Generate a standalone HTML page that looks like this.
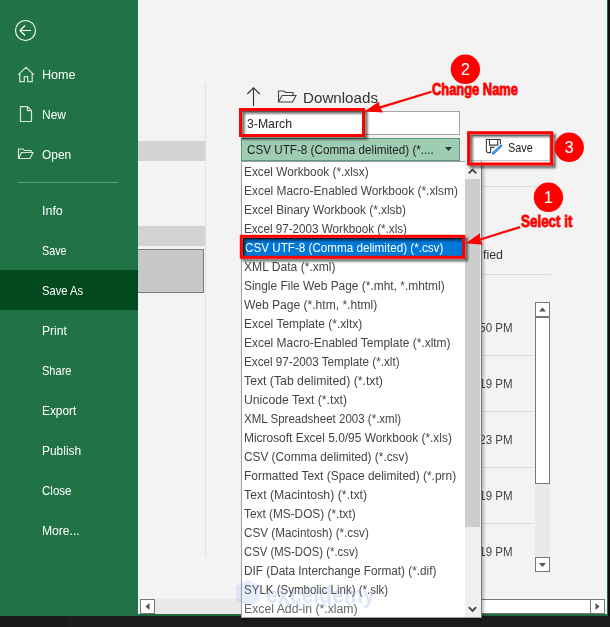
<!DOCTYPE html>
<html><head><meta charset="utf-8"><title>Save As CSV UTF-8</title>
<style>
*{margin:0;padding:0;box-sizing:border-box}
html,body{width:610px;height:627px;overflow:hidden;background:#f3f3f3;font-family:"Liberation Sans",sans-serif;}
.abs{position:absolute}
#root{position:relative;width:610px;height:627px;overflow:hidden;background:#f3f3f3}
.t{position:absolute;white-space:nowrap;line-height:1}
.side{left:0;top:0;width:138px;height:616px;background:#217346}
.nav{position:absolute;left:42px;color:#fff;font-size:13px;white-space:nowrap;line-height:16px;height:16px;transform-origin:0 50%;margin-top:1px}
.li{position:absolute;left:245px;color:#444;font-size:12px;white-space:nowrap;line-height:19px;height:19px;transform-origin:0 50%}
.tm{position:absolute;right:97.5px;color:#444;font-size:12px;white-space:nowrap;line-height:16px;transform-origin:100% 50%;transform:scaleX(.95)}
.hl{position:absolute;height:1px;background:#dcdcdc}
</style></head><body><div id="root">

<!-- sidebar -->
<div class="abs side"></div>
<div class="abs" style="left:0;top:270px;width:138px;height:40px;background:#024a1e"></div>
<svg class="abs" style="left:0;top:0" width="138" height="200" viewBox="0 0 138 200" fill="none" stroke="#fff" stroke-width="1.1">
  <circle cx="25.5" cy="30.5" r="10"/>
  <path d="M31 30.5H20.5M25 25.5l-5 5 5 5" stroke-width="1.2"/>
  <g stroke="#d6e6dc" stroke-width="1.2">
  <path d="M18.3 74.600l7.700-7.200 7.700 7.200M19.800 73.300v8.300h4.500v-5h3.400v5h4.500V73.300"/>
  <path d="M20.500 106.700h7l4 4v10.800h-11zM27.500 106.700v4h4"/>
  <path d="M18.500 158.500v-9.500h4.500l1.500 1.500h6.500v2.500M18.500 158.500l3-6h11.500l-3 6z"/>
  </g>
</svg>
<div class="t" style="left:42px;transform-origin:0 50%;top:68.00px;font-size:13px;color:#fff;transform:scaleX(0.969)">Home</div>
<div class="t" style="left:42px;transform-origin:0 50%;top:108.00px;font-size:13px;color:#fff;transform:scaleX(0.921)">New</div>
<div class="t" style="left:42px;transform-origin:0 50%;top:148.00px;font-size:13px;color:#fff;transform:scaleX(0.918)">Open</div>
<div class="t" style="left:42px;transform-origin:0 50%;top:204.00px;font-size:13px;color:#fff;transform:scaleX(0.959)">Info</div>
<div class="t" style="left:42px;transform-origin:0 50%;top:244.00px;font-size:13px;color:#fff;transform:scaleX(0.828)">Save</div>
<div class="t" style="left:42px;transform-origin:0 50%;top:284.00px;font-size:13px;color:#fff;transform:scaleX(0.864)">Save As</div>
<div class="t" style="left:42px;transform-origin:0 50%;top:324.00px;font-size:13px;color:#fff;transform:scaleX(0.928)">Print</div>
<div class="t" style="left:42px;transform-origin:0 50%;top:364.00px;font-size:13px;color:#fff;transform:scaleX(0.850)">Share</div>
<div class="t" style="left:42px;transform-origin:0 50%;top:404.00px;font-size:13px;color:#fff;transform:scaleX(0.913)">Export</div>
<div class="t" style="left:42px;transform-origin:0 50%;top:444.00px;font-size:13px;color:#fff;transform:scaleX(0.919)">Publish</div>
<div class="t" style="left:42px;transform-origin:0 50%;top:484.00px;font-size:13px;color:#fff;transform:scaleX(0.887)">Close</div>
<div class="t" style="left:42px;transform-origin:0 50%;top:524.00px;font-size:13px;color:#fff;transform:scaleX(0.932)">More...</div>
<div class="abs" style="left:18px;top:182px;width:100px;height:1px;background:#5a9a76"></div>

<!-- middle pane -->
<div class="abs" style="left:138px;top:141px;width:67px;height:19.500px;background:#d3d3d3"></div>
<div class="abs" style="left:138px;top:225.500px;width:67px;height:20px;background:#d3d3d3"></div>
<div class="abs" style="left:138px;top:249px;width:66px;height:43.500px;background:#c8c8c8;border:1px solid #7c7c7c;border-left:none"></div>
<div class="abs" style="left:205px;top:83px;width:1px;height:473px;background:#e1e1e1"></div>

<!-- main header -->
<svg class="abs" style="left:240px;top:84px" width="70" height="26" viewBox="0 0 70 26" fill="none" stroke="#333" stroke-width="1.1">
  <path d="M13.500 22V3.800M7.300 10l6.200-6.200 6.200 6.200"/>
  <path d="M38.500 18v-11h5.500l1.500 1.500h7.500v3M38.500 18l3.500-6.500h14l-3.500 6.500z" stroke="#444"/>
</svg>

<!-- file name input -->
<div class="abs" style="left:241px;top:111px;width:219px;height:24px;background:#fff;border:1px solid #a6a6a6"></div>

<!-- combo -->
<div class="abs" style="left:241px;top:138px;width:219px;height:22.500px;background:#9fcdb3;border:1px solid #5a9c78"></div>
<svg class="abs" style="left:444px;top:146px" width="10" height="6" viewBox="0 0 10 6"><path d="M1 1h7l-3.500 4z" fill="#333"/></svg>

<!-- save button -->
<div class="abs" style="left:470px;top:135px;width:80px;height:26px;background:#fff;border:1px solid #c6c6c6"></div>
<svg class="abs" style="left:484px;top:138px" width="20" height="20" viewBox="0 0 20 20" fill="none" stroke="#3c3c3c" stroke-width="1.1">
  <path d="M16.400 6.300V1.500H2.400V13.300L3.600 14.600H6.600"/><path d="M5.500 1.500V7.100H13.700V1.500M6.600 15V9.400H10.500"/>
  <path d="M17 8L9.300 15.200" stroke="#2b88d8" stroke-width="2.700" stroke-linecap="round"/>
  <path d="M16.600 8.400L9.700 14.800" stroke="#bfe0fa" stroke-width=".8" stroke-dasharray="1.2 1"/>
  <path d="M7.800 16.500l.6-2 1.500 1.400z" fill="#2b88d8" stroke="none"/>
</svg>

<div class="t" style="left:303.3px;transform-origin:0 50%;top:89.98px;font-size:15.5px;color:#333;transform:scaleX(0.978)">Downloads</div>
<div class="t" style="left:247px;transform-origin:0 50%;top:117.74px;font-size:12px;color:#222;transform:scaleX(1.022)">3-March</div>
<div class="t" style="left:246.8px;transform-origin:0 50%;top:143.64px;font-size:12px;color:#222;transform:scaleX(0.973)">CSV UTF-8 (Comma delimited) (*....</div>
<div class="t" style="left:508px;transform-origin:0 50%;top:141.94px;font-size:12px;color:#222;transform:scaleX(0.906)">Save</div>

<!-- file list fragments -->
<div class="hl" style="left:482px;top:186px;width:69px"></div>
<div class="t" style="left:483px;transform-origin:0 50%;top:249.02px;font-size:12.5px;color:#333;transform:scaleX(0.992)">fied</div>
<div class="t" style="right:97px;transform-origin:100% 50%;top:321.62px;font-size:12.5px;color:#444;transform:scaleX(0.924)">:50 PM</div>
<div class="t" style="right:97px;transform-origin:100% 50%;top:377.62px;font-size:12.5px;color:#444;transform:scaleX(0.924)">:19 PM</div>
<div class="t" style="right:97px;transform-origin:100% 50%;top:433.62px;font-size:12.5px;color:#444;transform:scaleX(0.924)">:23 PM</div>
<div class="t" style="right:97px;transform-origin:100% 50%;top:489.62px;font-size:12.5px;color:#444;transform:scaleX(0.924)">:19 PM</div>
<div class="t" style="right:97px;transform-origin:100% 50%;top:545.62px;font-size:12.5px;color:#444;transform:scaleX(0.924)">:19 PM</div>
<div class="hl" style="left:482px;top:274px;width:69px"></div>
<div class="hl" style="left:482px;top:355px;width:52px"></div>
<div class="hl" style="left:482px;top:411px;width:52px"></div>
<div class="hl" style="left:482px;top:467px;width:52px"></div>
<div class="hl" style="left:482px;top:523px;width:52px"></div>

<!-- vertical scrollbar -->
<div class="abs" style="left:535px;top:302px;width:15px;height:270px;background:#e9e9e9"></div>
<div class="abs" style="left:535px;top:302px;width:15px;height:15px;background:#fff;border:1px solid #777"></div>
<svg class="abs" style="left:535px;top:302px" width="15" height="15" viewBox="0 0 15 15"><path d="M4 9.500h7l-3.500-4z" fill="#555"/></svg>
<div class="abs" style="left:535px;top:317px;width:15px;height:167px;background:#fff;border:1px solid #777"></div>
<div class="abs" style="left:535px;top:557px;width:15px;height:15px;background:#fff;border:1px solid #777"></div>
<svg class="abs" style="left:535px;top:557px" width="15" height="15" viewBox="0 0 15 15"><path d="M4 6h7l-3.500 4z" fill="#555"/></svg>

<!-- horizontal scrollbar -->
<div class="abs" style="left:140px;top:599px;width:465px;height:15px;background:#e9e9e9"></div>
<div class="abs" style="left:140px;top:599px;width:15px;height:15px;background:#fff;border:1px solid #777"></div>
<svg class="abs" style="left:140px;top:599px" width="15" height="15" viewBox="0 0 15 15"><path d="M9.500 4v7l-4-3.500z" fill="#555"/></svg>
<div class="abs" style="left:400px;top:599px;width:191px;height:15px;background:#fff;border:1px solid #777"></div>
<div class="abs" style="left:590px;top:599px;width:15px;height:15px;background:#fff;border:1px solid #777"></div>
<svg class="abs" style="left:590px;top:599px" width="15" height="15" viewBox="0 0 15 15"><path d="M5.500 4v7l4-3.500z" fill="#555"/></svg>

<!-- window edges / taskbar -->
<div class="abs" style="left:138px;top:614px;width:470px;height:2px;background:#1e6b41"></div>
<div class="abs" style="left:607px;top:0;width:1px;height:616px;background:#1e6b41"></div>
<div class="abs" style="left:608px;top:0;width:2px;height:616px;background:#111"></div>
<div class="abs" style="left:0;top:616px;width:610px;height:11px;background:#1d1d1d"></div>
<div class="abs" style="left:0;top:616px;width:67px;height:11px;background:#191919"></div>

<!-- dropdown list -->
<div class="abs" style="left:241px;top:161px;width:241px;height:457px;background:#fff;border:1px solid #a0a0a0;border-right-color:#7a7a7a;box-shadow:2px 2px 3px rgba(0,0,0,.25)"></div>
<div class="abs" style="left:465px;top:161px;width:16px;height:456px;background:#f0f0f0"></div>
<div class="abs" style="left:465px;top:179px;width:15px;height:348px;background:#cdcdcd"></div>
<svg class="abs" style="left:465px;top:161px" width="15" height="456" viewBox="0 0 15 456" fill="none" stroke="#444" stroke-width="1.9"><path d="M3.800 12.300l3.700-3.700 3.700 3.700"/><path d="M3.800 446.200l3.700 3.700 3.700-3.700"/></svg>

<div class="abs" style="left:243px;top:238px;width:220px;height:19px;background:#0078d7;border:1px solid rgba(15,20,30,.8)"></div>
<div class="t" style="left:244.3px;transform-origin:0 50%;top:165.74px;font-size:12px;color:#444;transform:scaleX(0.985)">Excel Workbook (*.xlsx)</div>
<div class="t" style="left:244.3px;transform-origin:0 50%;top:184.74px;font-size:12px;color:#444;transform:scaleX(0.994)">Excel Macro-Enabled Workbook (*.xlsm)</div>
<div class="t" style="left:244.3px;transform-origin:0 50%;top:203.74px;font-size:12px;color:#444;transform:scaleX(0.985)">Excel Binary Workbook (*.xlsb)</div>
<div class="t" style="left:244.3px;transform-origin:0 50%;top:222.74px;font-size:12px;color:#444;transform:scaleX(0.971)">Excel 97-2003 Workbook (*.xls)</div>
<div class="t" style="left:245.3px;transform-origin:0 50%;top:241.74px;font-size:12px;color:#fff;transform:scaleX(0.972)">CSV UTF-8 (Comma delimited) (*.csv)</div>
<div class="t" style="left:244.3px;transform-origin:0 50%;top:260.74px;font-size:12px;color:#444;transform:scaleX(1.007)">XML Data (*.xml)</div>
<div class="t" style="left:244.3px;transform-origin:0 50%;top:279.74px;font-size:12px;color:#444;transform:scaleX(0.994)">Single File Web Page (*.mht, *.mhtml)</div>
<div class="t" style="left:244.3px;transform-origin:0 50%;top:298.74px;font-size:12px;color:#444;transform:scaleX(1.006)">Web Page (*.htm, *.html)</div>
<div class="t" style="left:244.3px;transform-origin:0 50%;top:317.74px;font-size:12px;color:#444;transform:scaleX(0.998)">Excel Template (*.xltx)</div>
<div class="t" style="left:244.3px;transform-origin:0 50%;top:336.74px;font-size:12px;color:#444;transform:scaleX(0.997)">Excel Macro-Enabled Template (*.xltm)</div>
<div class="t" style="left:244.3px;transform-origin:0 50%;top:355.74px;font-size:12px;color:#444;transform:scaleX(0.973)">Excel 97-2003 Template (*.xlt)</div>
<div class="t" style="left:244.3px;transform-origin:0 50%;top:374.74px;font-size:12px;color:#444;transform:scaleX(1.021)">Text (Tab delimited) (*.txt)</div>
<div class="t" style="left:244.3px;transform-origin:0 50%;top:393.74px;font-size:12px;color:#444;transform:scaleX(1.018)">Unicode Text (*.txt)</div>
<div class="t" style="left:244.3px;transform-origin:0 50%;top:412.74px;font-size:12px;color:#444;transform:scaleX(0.960)">XML Spreadsheet 2003 (*.xml)</div>
<div class="t" style="left:244.3px;transform-origin:0 50%;top:431.74px;font-size:12px;color:#444;transform:scaleX(0.994)">Microsoft Excel 5.0/95 Workbook (*.xls)</div>
<div class="t" style="left:244.3px;transform-origin:0 50%;top:450.74px;font-size:12px;color:#444;transform:scaleX(0.986)">CSV (Comma delimited) (*.csv)</div>
<div class="t" style="left:244.3px;transform-origin:0 50%;top:469.74px;font-size:12px;color:#444;transform:scaleX(0.995)">Formatted Text (Space delimited) (*.prn)</div>
<div class="t" style="left:244.3px;transform-origin:0 50%;top:488.74px;font-size:12px;color:#444;transform:scaleX(1.026)">Text (Macintosh) (*.txt)</div>
<div class="t" style="left:244.3px;transform-origin:0 50%;top:507.74px;font-size:12px;color:#444;transform:scaleX(0.986)">Text (MS-DOS) (*.txt)</div>
<div class="t" style="left:244.3px;transform-origin:0 50%;top:526.74px;font-size:12px;color:#444;transform:scaleX(0.975)">CSV (Macintosh) (*.csv)</div>
<div class="t" style="left:244.3px;transform-origin:0 50%;top:545.74px;font-size:12px;color:#444;transform:scaleX(0.942)">CSV (MS-DOS) (*.csv)</div>
<div class="t" style="left:244.3px;transform-origin:0 50%;top:564.74px;font-size:12px;color:#444;transform:scaleX(0.981)">DIF (Data Interchange Format) (*.dif)</div>
<div class="t" style="left:244.3px;transform-origin:0 50%;top:583.74px;font-size:12px;color:#444;transform:scaleX(0.961)">SYLK (Symbolic Link) (*.slk)</div>
<div class="t" style="left:244.3px;transform-origin:0 50%;top:602.74px;font-size:12px;color:#666;transform:scaleX(1.020)">Excel Add-in (*.xlam)</div>

<!-- watermark -->
<div class="abs" style="left:266px;top:583.500px;line-height:1;font-size:23px;font-weight:bold;color:#7f9fe8;opacity:.26;white-space:nowrap;transform-origin:0 50%;transform:scaleX(.925)">exceldemy</div>
<div class="abs" style="left:280px;top:602px;font-size:6px;color:#7f9fe8;opacity:.4;letter-spacing:1.5px;white-space:nowrap">EXCEL · DATA · BI</div>
<svg class="abs" style="left:234px;top:578px;opacity:.18" width="28" height="30" viewBox="0 0 28 30"><path d="M2 8l12-6 12 6v14l-12 6-12-6z" fill="#7f9fe8"/></svg>

<!-- annotations -->
<svg class="abs" style="left:0;top:0" width="610" height="627" viewBox="0 0 610 627">
  <defs><filter id="sh" x="-20%" y="-20%" width="150%" height="150%"><feDropShadow dx="2.600" dy="2.600" stdDeviation="1.100" flood-color="#000" flood-opacity=".62"/></filter></defs>
  <g fill="none" stroke="#f00" stroke-width="3" filter="url(#sh)">
    <rect x="240.500" y="109.500" width="123" height="26"/>
    <rect x="468.600" y="132.700" width="83" height="31.300"/>
    <rect x="241.300" y="236.300" width="222.400" height="21"/>
  </g>
  <g fill="#f00">
    <circle cx="465.400" cy="69.300" r="14.700"/>
    <circle cx="569.200" cy="147.300" r="14.700"/>
    <circle cx="548.400" cy="197.300" r="14.700"/>
  </g>
  <g fill="#fff" font-family="Liberation Sans, sans-serif" font-size="16" text-anchor="middle">
    <text x="465.400" y="75">2</text><text x="569.200" y="153">3</text><text x="548.400" y="203">1</text>
  </g>
  <g stroke="#f00" stroke-width="2.200" fill="#f00">
    <line x1="431.500" y1="91.700" x2="379.500" y2="107.600"/>
    <path d="M364.400 111.400L378.800 101.800L380 107.500L383.200 112.600z" stroke="none"/>
    <line x1="520" y1="227.100" x2="479.600" y2="239.700"/>
    <path d="M465.800 243.200L480 233.200L479.900 239.700L482.800 244.700z" stroke="none"/>
  </g>
  <g fill="#f00" stroke="#f00" stroke-width=".8" font-family="Liberation Sans, sans-serif" font-weight="bold" font-size="16.500">
    <text x="432" y="94.600" textLength="86" lengthAdjust="spacingAndGlyphs">Change Name</text>
    <text x="521" y="226.500" textLength="51.500" lengthAdjust="spacingAndGlyphs">Select it</text>
  </g>
</svg>

</div></body></html>
